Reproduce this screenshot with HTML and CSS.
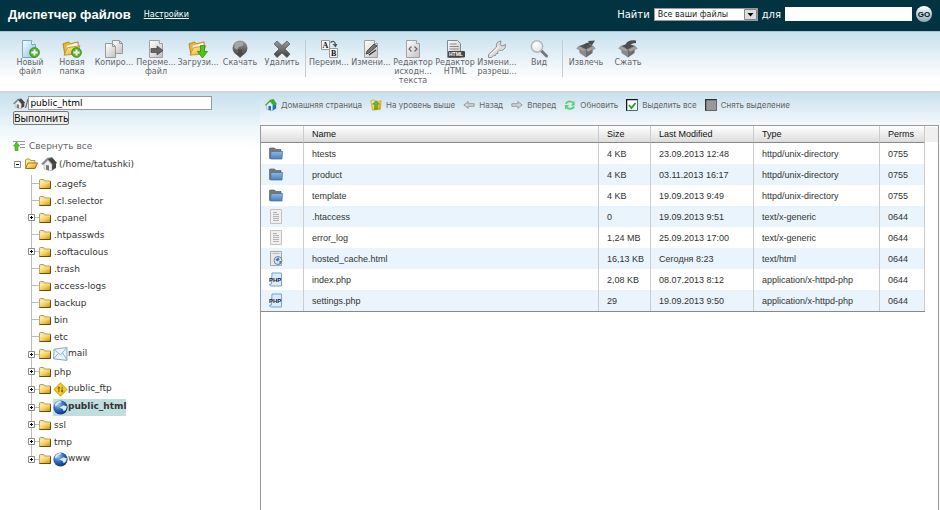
FILE: index.html
```html
<!DOCTYPE html>
<html lang="ru">
<head>
    <meta charset="UTF-8">
    <title>Диспетчер файлов</title>
    <link rel="stylesheet" href="styles.css">
</head>
<body>
    <!-- Shared icons -->
    <svg class="sprite" aria-hidden="true">
        <defs>
            <linearGradient id="gold" x1="0" y1="0" x2="1" y2="1">
                <stop offset="0" stop-color="#fff3b8"/>
                <stop offset=".5" stop-color="#f3cf5c"/>
                <stop offset="1" stop-color="#c98d12"/>
            </linearGradient>
            <linearGradient id="sheet" x1="0" y1="0" x2="1" y2="1">
                <stop offset="0" stop-color="#ffffff"/>
                <stop offset="1" stop-color="#c2c2c2"/>
            </linearGradient>
            <linearGradient id="sky" x1="0" y1="0" x2="1" y2="1">
                <stop offset="0" stop-color="#ffffff"/>
                <stop offset="1" stop-color="#7fbfe8"/>
            </linearGradient>
            <linearGradient id="steel" x1="0" y1="0" x2="0" y2="1">
                <stop offset="0" stop-color="#9a9a9a"/>
                <stop offset="1" stop-color="#404040"/>
            </linearGradient>
            <linearGradient id="blue" x1="0" y1="0" x2="0" y2="1">
                <stop offset="0" stop-color="#8db8e6"/>
                <stop offset="1" stop-color="#4a80bd"/>
            </linearGradient>
            <radialGradient id="ocean" cx=".35" cy=".3" r=".8">
                <stop offset="0" stop-color="#9cc4f0"/>
                <stop offset=".5" stop-color="#2a66b5"/>
                <stop offset="1" stop-color="#0a2a66"/>
            </radialGradient>
            <radialGradient id="lens" cx=".4" cy=".3" r=".7">
                <stop offset="0" stop-color="#ffffff"/>
                <stop offset="1" stop-color="#dde4e9"/>
            </radialGradient>
        </defs>

        <symbol id="i-plus" viewBox="0 0 10 10">
            <circle cx="5" cy="5" r="4.4" fill="#58b82c" stroke="#2f8212" stroke-width=".8"/>
            <path d="M5 2.2v5.6M2.2 5h5.6" stroke="#fff" stroke-width="1.6"/>
        </symbol>
        <symbol id="i-open" viewBox="0 0 20 18">
            <path d="M1 4l6-2 2 2 8-2v4L3 16z" fill="#e5b53a" stroke="#a5760f" stroke-width=".8"/>
            <path d="M5 6l11-3 1 4-12 4z" fill="#fffbe8"/>
            <path d="M2 16L6 8l13-2-4 9z" fill="url(#gold)" stroke="#b98516" stroke-width=".8"/>
        </symbol>
        <symbol id="i-rootfolder" viewBox="0 0 13 12">
            <path d="M.5 10V2l1-1h3l1 1.500h4.500V5" fill="#f6e7a0" stroke="#b8892a" stroke-width=".9"/>
            <path d="M.5 10.500L3 5h9.500l-2.500 5.500z" fill="url(#gold)" stroke="#8f6613" stroke-width=".9"/>
        </symbol>
        <symbol id="i-newfile" viewBox="0 0 20 18">
            <path d="M2.500 .5h9l4 4v13h-13z" fill="url(#sky)" stroke="#77a9c9"/>
            <path d="M11.500 .5v4h4" fill="#fff" stroke="#77a9c9"/>
            <use href="#i-plus" x="9" y="7" width="11" height="11"/>
        </symbol>
        <symbol id="i-newfolder" viewBox="0 0 20 18">
            <use href="#i-open" width="19" height="17"/>
            <use href="#i-plus" x="9" y="7" width="11" height="11"/>
        </symbol>
        <symbol id="i-copy" viewBox="0 0 20 18">
            <path d="M8.500 .5h7l3 3v10h-10z" fill="url(#sheet)" stroke="#999"/>
            <path d="M1.500 3.500h7l3 3v11h-10z" fill="url(#sheet)" stroke="#999"/>
            <path d="M8.500 3.500v3h3M15.500 .5v3h3" fill="none" stroke="#999"/>
        </symbol>
        <symbol id="i-sheet" viewBox="0 0 20 18">
            <path d="M3.500 .5h10l3 3v14h-13z" fill="url(#sheet)" stroke="#a0a0a0"/>
            <path d="M13.500 .5v3h3" fill="#fff" stroke="#a0a0a0"/>
        </symbol>
        <symbol id="i-move" viewBox="0 0 20 18">
            <use href="#i-sheet" width="20" height="18"/>
            <path d="M5 8.500h6V6l6 4.500-6 4.500v-2.500H5z" fill="#666" stroke="#333" stroke-width=".6"/>
        </symbol>
        <symbol id="i-upload" viewBox="0 0 20 18">
            <use href="#i-open" width="19" height="17"/>
            <path d="M12.500 5.500h4v6h3L14.500 18l-5-6.500h3z" fill="#4fc51c" stroke="#278208" stroke-width=".7"/>
        </symbol>
        <symbol id="i-download" viewBox="0 0 20 18">
            <circle cx="10" cy="8" r="7.500" fill="url(#steel)"/>
            <path d="M4.500 4q4-4 9-1l-1 3-4 1-1 3-3-2z" fill="#a5a5a5"/>
            <path d="M7.500 9h5v3.500h3L10 17.800 4.500 12.500h3z" fill="#4a4a4a" stroke="#777" stroke-width=".5"/>
        </symbol>
        <symbol id="i-delete" viewBox="0 0 20 18">
            <path d="M5 1l5 4.500L15 1l3 3-5 5 5 5-3 3.500L10 13l-5 4.500L2 14l5-5-5-5z" fill="url(#steel)" stroke="#555" stroke-width=".7"/>
        </symbol>
        <symbol id="i-rename" viewBox="0 0 20 18">
            <path d="M2.500 .5h8v9h-8zM10.500 8.500h8v9h-8z" fill="#f6f6f6" stroke="#999"/>
            <text x="3.500" y="8" class="glyph-serif">A</text>
            <text x="12" y="16" class="glyph-serif">B</text>
            <path d="M11.500 2.500q4-3 5 2" fill="none" stroke="#555" stroke-width="1.300"/>
            <path d="M13.500 4h5l-2 3.500z" fill="#555"/>
        </symbol>
        <symbol id="i-edit" viewBox="0 0 20 18">
            <use href="#i-sheet" width="20" height="18"/>
            <path d="M5 14l1-3 7-7 3 2-8 7z" fill="#777" stroke="#222" stroke-width=".7"/>
            <path d="M8 15l7-5" stroke="#333" stroke-width="1.400"/>
        </symbol>
        <symbol id="i-code" viewBox="0 0 20 18">
            <use href="#i-sheet" width="20" height="18"/>
            <path d="M8.500 6.500L6 9l2.500 2.500M11.500 6.500L14 9l-2.500 2.500" fill="none" stroke="#666" stroke-width="1.100"/>
        </symbol>
        <symbol id="i-html" viewBox="0 0 20 18">
            <path d="M2.500 .5h10l3 3v14h-13z" fill="url(#sheet)" stroke="#888"/>
            <path d="M4.500 4h7M4.500 6.500h9M4.500 9h9" stroke="#888"/>
            <rect x="3" y="11" width="17" height="6.500" rx="1" fill="#444"/>
            <text x="4" y="16" class="glyph-html">HTML</text>
        </symbol>
        <symbol id="i-key" viewBox="0 0 20 18">
            <path d="M1.500 14.500l8-7.500q-1-4 2.500-5.500l2-.5-1 3.500 2 1.500 3.500-1.500q.5 4-2.500 5.500-1.500 1-3.500 0l-2 2 .5 1.500-2 .2-.5 1.800-2 .2-2 1.800H1.500z" fill="#dcdcdc" stroke="#888" stroke-width=".9"/>
            <path d="M3 15l9-8.500" stroke="#fff"/>
        </symbol>
        <symbol id="i-view" viewBox="0 0 20 18">
            <path d="M12 10.500l5.500 5.500" stroke="#777" stroke-width="3" stroke-linecap="round"/>
            <circle cx="8" cy="6.500" r="5.700" fill="url(#lens)" stroke="#b5b5b5" stroke-width="1.500"/>
        </symbol>
        <symbol id="i-box" viewBox="0 0 20 18">
            <path d="M3 6l7 3.500v8L3.500 13z" fill="#8b8b8b"/>
            <path d="M17 6l-7 3.500v8l6.500-4.500z" fill="#6c6c6c"/>
            <path d="M3 6l7-2.500L17 6l-7 3.500z" fill="#555"/>
            <path d="M3 6L.8 8.500 8 12l2-2.500zM17 6l2.200 2.500L12 12l-2-2.500z" fill="#a2a2a2" stroke="#777" stroke-width=".5"/>
        </symbol>
        <symbol id="i-extract" viewBox="0 0 20 18">
            <use href="#i-box" width="20" height="18"/>
            <path d="M7 8q0-5 6-5.500l-1-1.500 7-.5-3.500 5.500-1-1.500Q10 5 10.500 8.500z" fill="#4d4d4d"/>
        </symbol>
        <symbol id="i-compress" viewBox="0 0 20 18">
            <use href="#i-box" width="20" height="18"/>
            <path d="M18 .5q-9-1-10.500 4.500H5l4.500 4.500 5-4H12q1-2.500 6-2.500z" fill="#4d4d4d"/>
        </symbol>

        <symbol id="i-house" viewBox="0 0 16 14">
            <path d="M10 8l5-2v5l-5 3z" fill="#444"/>
            <path d="M3 7l4-4 4 5v6l-8-2z" fill="#eee" stroke="#999" stroke-width=".5"/>
            <path d="M0 7l6-6 5-1 5 6-4 2-5-5-5 5z" fill="#888"/>
            <path d="M7 2l4-1 5 5-4 2z" fill="#444"/>
            <path d="M5 8l3 .5v5L5 12.500z" fill="#777"/>
        </symbol>
        <symbol id="i-homegreen" viewBox="0 0 14 14">
            <path d="M8 7l5-1v5l-5 3z" fill="#2472b8"/>
            <path d="M2 7l4-4 3 4v7l-7-2z" fill="#e7f4ff" stroke="#5293c8" stroke-width=".5"/>
            <path d="M0 7l6-6 4-1 4 6-4 1.500L6 3 1 8z" fill="#39ab28"/>
            <path d="M4 8l3 .5v5L4 12.500z" fill="#2b6db0"/>
        </symbol>
        <symbol id="i-up" viewBox="0 0 14 14">
            <path d="M1 2l4-1 2 2 6-1-1 10-9 1z" fill="url(#gold)" stroke="#c1962c" stroke-width=".7"/>
            <path d="M7 2l4 4H8.500v6h-3V6H3z" fill="#63c51c" stroke="#2c8410" stroke-width=".6"/>
        </symbol>
        <symbol id="i-left" viewBox="0 0 14 10">
            <path d="M1 5l5-4v2.500h7v3H6V9z" fill="#d5d5d5" stroke="#888" stroke-width=".9"/>
        </symbol>
        <symbol id="i-right" viewBox="0 0 14 10">
            <path d="M13 5L8 1v2.500H1v3h7V9z" fill="#d5d5d5" stroke="#888" stroke-width=".9"/>
        </symbol>
        <symbol id="i-refresh" viewBox="0 0 14 12">
            <path d="M2 4.500q4-5 9-1" fill="none" stroke="#5ccf72" stroke-width="2.200"/>
            <path d="M12.500 1v5.500H8z" fill="#5ccf72"/>
            <path d="M12 8q-4 4.500-9 1" fill="none" stroke="#5ccf72" stroke-width="2.200"/>
            <path d="M1 11.500V6h5z" fill="#5ccf72"/>
        </symbol>
        <symbol id="i-checked" viewBox="0 0 12 12">
            <path d="M0 0h12v12H0z" fill="#fff"/>
            <path d="M0 12V0h12" fill="none" stroke="#111" stroke-width="2.500"/>
            <path d="M.5 11.500h11V.5" fill="none" stroke="#46688c"/>
            <path d="M3 6l2.500 3L9.500 4" fill="none" stroke="#1ca32b" stroke-width="1.800"/>
        </symbol>
        <symbol id="i-unchecked" viewBox="0 0 12 12">
            <path d="M0 0h12v12H0z" fill="#999"/>
            <path d="M0 12V0h12" fill="none" stroke="#333" stroke-width="2.500"/>
            <path d="M.5 11.500h11V.5" fill="none" stroke="#666"/>
        </symbol>

        <symbol id="i-collapse" viewBox="0 0 13 10">
            <path d="M0 .5h12M7 3.500h5M7 6.500h5" stroke="#999"/>
            <path d="M3.500 1l3 4H5v4.500H2V5H.5z" fill="#5ccb1a" stroke="#2f8f0c" stroke-width=".6"/>
        </symbol>
        <symbol id="i-folder" viewBox="0 0 12 10">
            <path d="M.5 1.500q0-1 1-1h3l1 1.500h6v7.500H.5z" fill="#f4e7a8" stroke="#a98429" stroke-width=".8"/>
            <path d="M.8 3.200h10.400v6H.8z" fill="url(#gold)"/>
            <path d="M.5 9.500h11V2.500" fill="none" stroke="#6b4e0b"/>
        </symbol>
        <symbol id="i-more" viewBox="0 0 7 7">
            <path d="M.5 .5h6v6h-6z" fill="#fff" stroke="#8a8a8a"/>
            <path d="M2 3.500h3M3.500 2v3" stroke="#000"/>
        </symbol>
        <symbol id="i-less" viewBox="0 0 7 7">
            <path d="M.5 .5h6v6h-6z" fill="#fff" stroke="#8a8a8a"/>
            <path d="M2 3.500h3" stroke="#000"/>
        </symbol>
        <symbol id="i-mail" viewBox="0 0 14 14">
            <path d="M1 2l12-1.500v12L.5 11z" fill="#eaf4fb" stroke="#7fa6c4" stroke-width=".9"/>
            <path d="M1 2l6 5.500 6-7M.5 11L5 6M13 12L9 5.500" fill="none" stroke="#8fb3cf" stroke-width=".9"/>
        </symbol>
        <symbol id="i-ftp" viewBox="0 0 14 14">
            <path d="M7 1l6 6-6 6-6-6z" fill="#f7cf28" stroke="#d9ae1c"/>
            <path d="M5.500 9.500V5M8.500 4.500V9" stroke="#7a5f08" stroke-width=".9"/>
            <path d="M4 6l1.500-2L7 6zM7 8l1.500 2L10 8z" fill="#7a5f08"/>
        </symbol>
        <symbol id="i-globe" viewBox="0 0 14 14">
            <circle cx="7" cy="7" r="6.600" fill="url(#ocean)"/>
            <path d="M2 4q2-3 5-3l1 1-3 1-1 2-2 1zM6 7l4-2 3 1-1 3-2 1.500L9 8.500z" fill="#d7e9f8"/>
        </symbol>

        <symbol id="i-dir" viewBox="0 0 14 12">
            <path d="M.5 11V1q0-.5.500-.5h4.500L7 2h5v3z" fill="#777" stroke="#555" stroke-width=".6"/>
            <path d="M1.500 11.500l.5-7.500h11.500l-.5 7.500z" fill="url(#blue)" stroke="#44709f" stroke-width=".7"/>
        </symbol>
        <symbol id="i-text" viewBox="0 0 14 15">
            <path d="M1.500 .5h11v14h-11z" fill="#f0f0f0" stroke="#c2c2c2"/>
            <path d="M4 3.500h4M4 5.500h6M4 7.500h6M4 9.500h6M4 11.500h6" stroke="#b2b2b2"/>
        </symbol>
        <symbol id="i-web" viewBox="0 0 14 15">
            <path d="M1.500 .5h11v14h-11z" fill="#e8e8e8" stroke="#a8a8a8"/>
            <path d="M3.500 2.500h7" stroke="#bbb"/>
            <circle cx="9" cy="9.500" r="4" fill="#d3e3f3" stroke="#6685a8"/>
            <path d="M6.500 8.500l3-2 1 2-2 2zM10.500 9.500l2 1-2 3z" fill="#4775a8"/>
        </symbol>
        <symbol id="i-php" viewBox="0 0 14 14">
            <path d="M3 .5h9.500v13h-10q-2 0-2-2h2z" fill="#dceafa" stroke="#78a2d0"/>
            <text x="0" y="9" class="glyph-php">PHP</text>
        </symbol>
    </svg>

    <header class="header">
        <h1>Диспетчер файлов</h1>
        <a href="#">Настройки</a>
        <form class="search">
            <label for="scope">Найти</label>
            <span class="select">
                <select id="scope">
                    <option>Все ваши файлы</option>
                </select>
                <svg viewBox="0 0 13 11"><path d="M.5 .5h12v10H.5z" fill="#ddd" stroke="#888"/><path d="M3.500 4h6l-3 3.500z" fill="#000"/></svg>
            </span>
            <label for="query">для</label>
            <input id="query" type="text">
            <button class="go" type="button">GO</button>
        </form>
    </header>

    <nav class="toolbar">
        <button><svg><use href="#i-newfile"/></svg>Новый<br>файл</button>
        <button><svg><use href="#i-newfolder"/></svg>Новая<br>папка</button>
        <button><svg><use href="#i-copy"/></svg>Копиро...</button>
        <button><svg><use href="#i-move"/></svg>Переме...<br>файл</button>
        <button><svg><use href="#i-upload"/></svg>Загрузи...</button>
        <button><svg><use href="#i-download"/></svg>Скачать</button>
        <button><svg><use href="#i-delete"/></svg>Удалить</button>
        <span class="divider"></span>
        <button><svg><use href="#i-rename"/></svg>Переим...</button>
        <button><svg><use href="#i-edit"/></svg>Измени...</button>
        <button><svg><use href="#i-code"/></svg>Редактор<br>исходн...<br>текста</button>
        <button><svg><use href="#i-html"/></svg>Редактор<br>HTML</button>
        <button><svg><use href="#i-key"/></svg>Измени...<br>разреш...</button>
        <button><svg><use href="#i-view"/></svg>Вид</button>
        <span class="divider"></span>
        <button><svg><use href="#i-extract"/></svg>Извлечь</button>
        <button><svg><use href="#i-compress"/></svg>Сжать</button>
    </nav>

    <main class="main">
        <aside class="sidebar">
            <form class="location">
                <div class="path">
                    <svg><use href="#i-house"/></svg>
                    <label for="path">/</label>
                    <input id="path" type="text" value="public_html">
                </div>
                <button type="button">Выполнить</button>
            </form>
            <div class="tree">
                <button class="collapse"><svg><use href="#i-collapse"/></svg>Свернуть все</button>
                <div class="root">
                    <button class="toggle" aria-label="Свернуть"><svg><use href="#i-less"/></svg></button>
                    <svg class="root-folder"><use href="#i-rootfolder"/></svg>
                    <svg class="root-home"><use href="#i-house"/></svg>
                    <a href="#">(/home/tatushki)</a>
                </div>
                <ul>
                    <li><svg class="folder"><use href="#i-folder"/></svg><a href="#">.cagefs</a></li>
                    <li><svg class="folder"><use href="#i-folder"/></svg><a href="#">.cl.selector</a></li>
                    <li><button class="toggle" aria-label="Развернуть"><svg><use href="#i-more"/></svg></button><svg class="folder"><use href="#i-folder"/></svg><a href="#">.cpanel</a></li>
                    <li><svg class="folder"><use href="#i-folder"/></svg><a href="#">.htpasswds</a></li>
                    <li><button class="toggle" aria-label="Развернуть"><svg><use href="#i-more"/></svg></button><svg class="folder"><use href="#i-folder"/></svg><a href="#">.softaculous</a></li>
                    <li><svg class="folder"><use href="#i-folder"/></svg><a href="#">.trash</a></li>
                    <li><svg class="folder"><use href="#i-folder"/></svg><a href="#">access-logs</a></li>
                    <li><svg class="folder"><use href="#i-folder"/></svg><a href="#">backup</a></li>
                    <li><svg class="folder"><use href="#i-folder"/></svg><a href="#">bin</a></li>
                    <li><svg class="folder"><use href="#i-folder"/></svg><a href="#">etc</a></li>
                    <li class="special"><button class="toggle" aria-label="Развернуть"><svg><use href="#i-more"/></svg></button><svg class="folder"><use href="#i-folder"/></svg><a href="#"><svg><use href="#i-mail"/></svg>mail</a></li>
                    <li><button class="toggle" aria-label="Развернуть"><svg><use href="#i-more"/></svg></button><svg class="folder"><use href="#i-folder"/></svg><a href="#">php</a></li>
                    <li class="special"><button class="toggle" aria-label="Развернуть"><svg><use href="#i-more"/></svg></button><svg class="folder"><use href="#i-folder"/></svg><a href="#"><svg><use href="#i-ftp"/></svg>public_ftp</a></li>
                    <li class="special"><button class="toggle" aria-label="Развернуть"><svg><use href="#i-more"/></svg></button><svg class="folder"><use href="#i-folder"/></svg><a class="selected" href="#"><svg><use href="#i-globe"/></svg>public_html</a></li>
                    <li><button class="toggle" aria-label="Развернуть"><svg><use href="#i-more"/></svg></button><svg class="folder"><use href="#i-folder"/></svg><a href="#">ssl</a></li>
                    <li><button class="toggle" aria-label="Развернуть"><svg><use href="#i-more"/></svg></button><svg class="folder"><use href="#i-folder"/></svg><a href="#">tmp</a></li>
                    <li class="special"><button class="toggle" aria-label="Развернуть"><svg><use href="#i-more"/></svg></button><svg class="folder"><use href="#i-folder"/></svg><a href="#"><svg><use href="#i-globe"/></svg>www</a></li>
                </ul>
            </div>
        </aside>

        <section class="content">
            <div class="actions">
                <button><svg><use href="#i-homegreen"/></svg>Домашняя страница</button>
                <button><svg><use href="#i-up"/></svg>На уровень выше</button>
                <button><svg><use href="#i-left"/></svg>Назад</button>
                <button><svg><use href="#i-right"/></svg>Вперед</button>
                <button><svg><use href="#i-refresh"/></svg>Обновить</button>
                <button><svg><use href="#i-checked"/></svg>Выделить все</button>
                <button><svg><use href="#i-unchecked"/></svg>Снять выделение</button>
            </div>
            <div class="files">
                <table>
                    <thead>
                        <tr>
                            <th class="col-icon"></th>
                            <th>Name</th>
                            <th class="col-size">Size</th>
                            <th class="col-date">Last Modified</th>
                            <th class="col-type">Type</th>
                            <th class="col-perms">Perms</th>
                        </tr>
                    </thead>
                    <tbody>
                        <tr><td><svg><use href="#i-dir"/></svg></td><td>htests</td><td>4 KB</td><td>23.09.2013 12:48</td><td>httpd/unix-directory</td><td>0755</td></tr>
                        <tr><td><svg><use href="#i-dir"/></svg></td><td>product</td><td>4 KB</td><td>03.11.2013 16:17</td><td>httpd/unix-directory</td><td>0755</td></tr>
                        <tr><td><svg><use href="#i-dir"/></svg></td><td>template</td><td>4 KB</td><td>19.09.2013 9:49</td><td>httpd/unix-directory</td><td>0755</td></tr>
                        <tr><td><svg><use href="#i-text"/></svg></td><td>.htaccess</td><td>0</td><td>19.09.2013 9:51</td><td>text/x-generic</td><td>0644</td></tr>
                        <tr><td><svg><use href="#i-text"/></svg></td><td>error_log</td><td>1,24 MB</td><td>25.09.2013 17:00</td><td>text/x-generic</td><td>0644</td></tr>
                        <tr><td><svg><use href="#i-web"/></svg></td><td>hosted_cache.html</td><td>16,13 KB</td><td>Сегодня 8:23</td><td>text/html</td><td>0644</td></tr>
                        <tr><td><svg><use href="#i-php"/></svg></td><td>index.php</td><td>2,08 KB</td><td>08.07.2013 8:12</td><td>application/x-httpd-php</td><td>0644</td></tr>
                        <tr><td><svg><use href="#i-php"/></svg></td><td>settings.php</td><td>29</td><td>19.09.2013 9:50</td><td>application/x-httpd-php</td><td>0644</td></tr>
                    </tbody>
                </table>
                <div class="gutter"></div>
            </div>
        </section>
    </main>
</body>
</html>
```
FILE: styles.css
```css
* {
    box-sizing: border-box;
}

body {
    margin: 0;
    min-height: 100vh;
    display: flex;
    flex-direction: column;
    font-family: Verdana, "DejaVu Sans", sans-serif;
    font-size: 9px;
    color: #333;
    background: #fff;
}

button {
    margin: 0;
    padding: 0;
    border: 0;
    background: none;
    font: inherit;
    color: inherit;
    cursor: pointer;
}

input,
select {
    margin: 0;
    font: inherit;
    border: 1px solid #999;
    border-radius: 0;
    background: #fff;
}

svg {
    flex: none;
    display: block;
}

a {
    color: inherit;
    text-decoration: none;
}

.sprite {
    position: absolute;
    width: 0;
    height: 0;
}

.glyph-serif {
    font: bold 8px "Liberation Serif", serif;
    fill: #111;
}

.glyph-html {
    font: bold 5px "Liberation Sans", sans-serif;
    fill: #fff;
}

.glyph-php {
    font: bold 6px "Liberation Sans", sans-serif;
    fill: #10203c;
}

/* Header */
.header {
    display: flex;
    align-items: center;
    height: 31px;
    padding: 0 8px 3px;
    background: #013440;
    color: #fff;
}

.header h1 {
    margin: 0 13px 0 0;
    font: bold 13px "Liberation Sans", Arial, sans-serif;
}

.header a {
    font-size: 8px;
    text-decoration: underline;
}

.search {
    display: flex;
    align-items: center;
    gap: 4px;
    margin-left: auto;
    font-size: 10px;
}

.select {
    position: relative;
    display: flex;
}

.select select {
    width: 104px;
    height: 13px;
    padding: 0 16px 0 3px;
    appearance: none;
    font-size: 8px;
    color: #222;
}

.select svg {
    position: absolute;
    top: 1px;
    right: 1px;
    width: 13px;
    height: 11px;
    pointer-events: none;
}

.search input {
    width: 127px;
    height: 14px;
    border-color: #fff;
}

.go {
    width: 16px;
    height: 16px;
    border-radius: 50%;
    background: linear-gradient(#fff, #8fa9b2);
    font: bold 8px "Liberation Sans", Arial, sans-serif;
    color: #012;
}

/* Main toolbar */
.toolbar {
    display: flex;
    height: 62px;
    padding: 8px 9px 0;
    border-top: 1px solid #a9c6d3;
    border-bottom: 2px solid #d2d6d8;
    background: linear-gradient(#c9e0ee, #fff 80%);
    font-size: 8px;
    line-height: 9px;
    color: #666;
}

.toolbar button {
    display: flex;
    flex-direction: column;
    align-items: center;
    width: 42px;
    white-space: nowrap;
}

.toolbar button svg {
    width: 20px;
    height: 18px;
}

.divider {
    width: 1px;
    height: 37px;
    margin: 0 2px;
    background: #c5ccd0;
}

/* Left panel */
.main {
    flex: 1;
    display: grid;
    grid-template-columns: 260px minmax(0, 1fr);
}

.location {
    height: 32px;
    padding: 3px 0 0 13px;
    background: linear-gradient(#c9e0ee, #e9f4f8);
}

.path {
    display: flex;
    align-items: center;
    font-size: 10px;
}

.path svg {
    width: 12px;
    height: 11px;
}

.path input {
    width: 184px;
    height: 14px;
    padding: 0 1px;
    font-size: 9px;
}

.location button {
    height: 14px;
    margin-top: 1px;
    border: 1px solid #777;
    border-radius: 2px;
    background: #eee;
    font: 10px/12px "Noto Sans", sans-serif;
    color: #111;
}

.tree {
    padding: 14px 0 0 13px;
    background: linear-gradient(#ecf6fa, #fff 24px);
}

.collapse {
    display: flex;
    align-items: center;
    gap: 3px;
    height: 13px;
    color: #666;
}

.collapse svg {
    width: 13px;
    height: 10px;
}

.root {
    display: flex;
    align-items: center;
    height: 22px;
    margin-top: 1px;
}

.toggle svg {
    width: 7px;
    height: 7px;
}

.root .toggle {
    margin: 0 4px 0 1px;
}

.root-folder {
    width: 13px;
    height: 12px;
}

.root-home {
    width: 16px;
    height: 14px;
    margin: 0 2px 0 3px;
}

.tree ul {
    margin: 0 0 0 18px;
    padding: 0;
    list-style: none;
    background: linear-gradient(#bbb, #bbb) 0 0 / 1px calc(100% - 9px) no-repeat;
}

.tree li {
    display: flex;
    align-items: center;
    height: 17px;
    padding-left: 8px;
    background: linear-gradient(#bbb, #bbb) 1px 50% / 7px 1px no-repeat;
}

.tree li.special {
    height: 18px;
}

.tree li .toggle {
    width: 7px;
    margin: 0 4px 0 -11px;
}

.folder {
    width: 12px;
    height: 10px;
    margin-right: 3px;
}

.special a {
    display: flex;
    height: 17px;
    line-height: 14px;
}

.special .folder {
    margin-right: 2px;
}

.special a svg {
    width: 15px;
    height: 15px;
    margin-top: 1px;
}

.selected {
    background: #bfdedd;
    font-weight: bold;
}

/* File list */
.content {
    display: flex;
    flex-direction: column;
    padding-right: 1px;
    background: linear-gradient(#c9e0ee, #fff 40px);
}

.actions {
    display: flex;
    align-items: center;
    gap: 8px;
    height: 32px;
    padding: 0 5px 8px;
    font-family: Inter, sans-serif;
    font-size: 8px;
    color: #666;
}

.actions button {
    display: flex;
    align-items: center;
    gap: 4px;
    white-space: nowrap;
}

.actions svg {
    width: 12px;
    height: 12px;
}

.files {
    flex: 1;
    display: flex;
    align-items: flex-start;
    border: solid #999;
    border-width: 1px 1px 0;
    background: #fff;
}

.gutter {
    width: 13px;
    height: 15px;
    margin-top: 1px;
    background: #f0f0f0;
}

table {
    flex: 1;
    table-layout: fixed;
    border-collapse: separate;
    border-spacing: 0;
    border-bottom: 1px solid #888;
    font: 9px "Liberation Sans", Arial, sans-serif;
    color: #333;
}

th,
td {
    height: 21px;
    padding: 0 0 0 8px;
    border-right: 1px solid #ccc;
    text-align: left;
    white-space: nowrap;
}

th {
    height: 17px;
    border-bottom: 1px solid #888;
    background: linear-gradient(#fff, #dcdcdc);
    font-weight: normal;
    color: #111;
}

tbody tr:nth-child(even) {
    background: #e9f4fc;
}

.col-icon {
    width: 43px;
}

.col-size {
    width: 52px;
}

.col-date {
    width: 103px;
}

.col-type {
    width: 126px;
}

.col-perms {
    width: 45px;
}

td svg {
    width: 14px;
    height: 15px;
}
```
